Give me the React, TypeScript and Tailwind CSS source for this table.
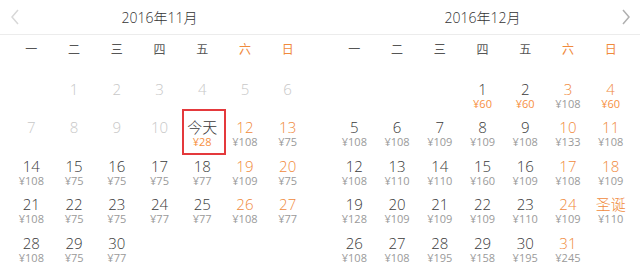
type Day = {
  label: string;
  price?: string;
  weekend?: boolean; // orange number
  hotPrice?: boolean; // orange price
  disabled?: boolean;
  today?: boolean;
};

const WEEK = ["一", "二", "三", "四", "五", "六", "日"];

const nov: (Day | null)[] = [
  null,
  { label: "1", disabled: true },
  { label: "2", disabled: true },
  { label: "3", disabled: true },
  { label: "4", disabled: true },
  { label: "5", disabled: true },
  { label: "6", disabled: true },
  { label: "7", disabled: true },
  { label: "8", disabled: true },
  { label: "9", disabled: true },
  { label: "10", disabled: true },
  { label: "今天", price: "¥28", hotPrice: true, today: true },
  { label: "12", price: "¥108", weekend: true },
  { label: "13", price: "¥75", weekend: true },
  { label: "14", price: "¥108" },
  { label: "15", price: "¥75" },
  { label: "16", price: "¥75" },
  { label: "17", price: "¥75" },
  { label: "18", price: "¥77" },
  { label: "19", price: "¥109", weekend: true },
  { label: "20", price: "¥75", weekend: true },
  { label: "21", price: "¥108" },
  { label: "22", price: "¥75" },
  { label: "23", price: "¥75" },
  { label: "24", price: "¥77" },
  { label: "25", price: "¥77" },
  { label: "26", price: "¥108", weekend: true },
  { label: "27", price: "¥77", weekend: true },
  { label: "28", price: "¥108" },
  { label: "29", price: "¥75" },
  { label: "30", price: "¥77" },
];

const dec: (Day | null)[] = [
  null,
  null,
  null,
  { label: "1", price: "¥60", hotPrice: true },
  { label: "2", price: "¥60", hotPrice: true },
  { label: "3", price: "¥108", weekend: true },
  { label: "4", price: "¥60", weekend: true, hotPrice: true },
  { label: "5", price: "¥108" },
  { label: "6", price: "¥108" },
  { label: "7", price: "¥109" },
  { label: "8", price: "¥109" },
  { label: "9", price: "¥108" },
  { label: "10", price: "¥133", weekend: true },
  { label: "11", price: "¥108", weekend: true },
  { label: "12", price: "¥108" },
  { label: "13", price: "¥110" },
  { label: "14", price: "¥110" },
  { label: "15", price: "¥160" },
  { label: "16", price: "¥109" },
  { label: "17", price: "¥108", weekend: true },
  { label: "18", price: "¥109", weekend: true },
  { label: "19", price: "¥128" },
  { label: "20", price: "¥109" },
  { label: "21", price: "¥109" },
  { label: "22", price: "¥109" },
  { label: "23", price: "¥110" },
  { label: "24", price: "¥109", weekend: true },
  { label: "圣诞", price: "¥110", weekend: true },
  { label: "26", price: "¥108" },
  { label: "27", price: "¥108" },
  { label: "28", price: "¥195" },
  { label: "29", price: "¥158" },
  { label: "30", price: "¥195" },
  { label: "31", price: "¥245", weekend: true },
];

function Chevron({ dir, color }: { dir: "left" | "right"; color: string }) {
  return (
    <svg width="10" height="16" viewBox="0 0 10 16" fill="none">
      <polyline
        points={dir === "left" ? "8,1 2,8 8,15" : "2,1 8,8 2,15"}
        stroke={color}
        strokeWidth="1.5"
      />
    </svg>
  );
}

function Cell({ day }: { day: Day | null }) {
  if (!day) return <div className="h-[38.5px]" />;
  const numColor = day.disabled
    ? "text-[#c8c8c8]"
    : day.weekend
      ? "text-[#f08a3c]"
      : "text-[#3a3a3a]";
  const priceColor = day.hotPrice ? "text-[#f7903f]" : "text-[#9a9a9a]";
  return (
    <div className="relative flex h-[38.5px] flex-col items-center pt-[15.5px]">
      {day.today && (
        <div className="absolute left-[1px] top-[5px] h-[46px] w-[44px] border-2 border-[#e4393c]" />
      )}
      <span className={`text-[15px] font-light leading-[16px] ${numColor}`}>{day.label}</span>
      {day.price && (
        <span className={`mt-[1px] text-[11px] leading-[12px] ${priceColor}`}>
          {day.price}
        </span>
      )}
    </div>
  );
}

function Month({ days }: { days: (Day | null)[] }) {
  return (
    <div className="w-[299px]">
      <div className="grid h-[30px] grid-cols-7 items-center text-center text-[12px]">
        {WEEK.map((w, i) => (
          <span key={w} className={i >= 5 ? "text-[#f08a3c]" : "text-[#555555]"}>
            {w}
          </span>
        ))}
      </div>
      <div className="grid grid-cols-7">
        {days.map((d, i) => (
          <Cell key={i} day={d} />
        ))}
      </div>
    </div>
  );
}

export default function App() {
  return (
    <div
      className="h-[274px] w-[640px] overflow-hidden bg-white"
      style={{ fontFamily: '"Open Sans", "Noto Sans CJK SC", sans-serif' }}
    >
      <div className="flex h-[35px] gap-[24px] border-b border-[#ececec] pl-[10px]">
        <div className="grid w-[299px] grid-cols-[20px_1fr_20px] items-center">
          <Chevron dir="left" color="#d8d8d8" />
          <span className="text-center text-[14px] font-light text-[#333333]">2016年11月</span>
          <span />
        </div>
        <div className="grid w-[299px] grid-cols-[20px_1fr_20px] items-center">
          <span />
          <span className="text-center text-[14px] font-light text-[#333333]">2016年12月</span>
          <div className="flex justify-end pr-[1px]">
            <Chevron dir="right" color="#b0b0b0" />
          </div>
        </div>
      </div>
      <div className="flex gap-[24px] pl-[10px]">
        <Month days={nov} />
        <Month days={dec} />
      </div>
    </div>
  );
}
